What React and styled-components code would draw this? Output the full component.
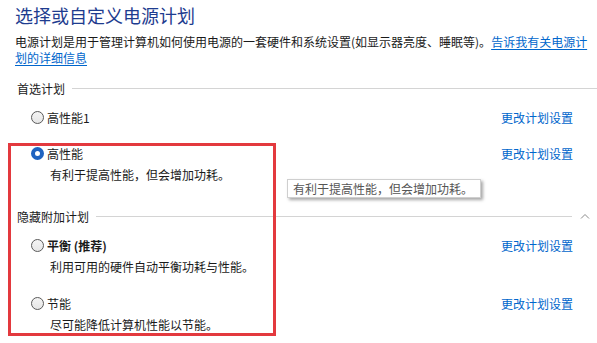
import React from 'react';
import styled, {createGlobalStyle} from 'styled-components';

const GlobalStyle = createGlobalStyle`
    html, body {
        margin: 0;
        padding: 0;
        background: #ffffff;
    }

    body {
        font-family: 'Microsoft YaHei', 'Noto Sans CJK SC', 'Noto Sans', sans-serif;
        font-size: 12px;
        color: #1a1a1a;
    }
`;

const Page = styled.main`
    position: relative;
    width: 597px;
    height: 343px;
    overflow: hidden;
    box-sizing: border-box;
    padding: 3px 0 0 15px;
`;

const Title = styled.h1`
    margin: 0;
    font-size: 18px;
    line-height: 24px;
    font-weight: normal;
    color: #1e3c8f;
`;

const Intro = styled.p`
    margin: 7px 8px 0 0;
    line-height: 16px;
`;

const IntroLink = styled.a`
    color: #0066cc;
    text-decoration: underline;
    text-underline-offset: 2px;
`;

const Section = styled.section`
    margin-top: ${(p) => p.$top}px;
`;

const Header = styled.div`
    display: flex;
    align-items: center;
    height: 20px;
    padding-left: 2px;
    color: #1a1a1a;
`;

const Rule = styled.span`
    flex: 1;
    height: 1px;
    margin-left: 7px;
    background: #d4d4d4;
`;

const Chevron = styled.span`
    display: flex;
    width: 25px;
    justify-content: center;
    align-items: center;
`;

const PlanList = styled.div`
    display: flex;
    flex-direction: column;
    gap: 16px;
    margin-top: 9px;
    padding-right: 24px;
`;

const Plan = styled.div`
    display: flex;
    flex-direction: column;
`;

const PlanRow = styled.label`
    display: flex;
    align-items: center;
    height: 20px;
    padding-left: 16px;
`;

const Radio = styled.span`
    box-sizing: border-box;
    width: 13px;
    height: 13px;
    border-radius: 50%;
    margin-right: 3px;
    flex-shrink: 0;
    ${(p) =>
        p.$checked
            ? `
        border: 4px solid #1f63c0;
        background: #ffffff;
    `
            : `
        border: 1px solid #5a5a5a;
        background: linear-gradient(#f4f4f4, #e6e6e6);
    `}
`;

const PlanName = styled.span`
    flex: 1;
    font-weight: ${(p) => (p.$bold ? 'bold' : 'normal')};
`;

const ChangeLink = styled.a`
    color: #0066cc;
    text-decoration: none;
`;

const PlanDesc = styled.div`
    margin-top: 2px;
    padding-left: 35px;
    line-height: 20px;
`;

const Highlight = styled.div`
    position: absolute;
    left: 8px;
    top: 143px;
    width: 268px;
    height: 193px;
    box-sizing: border-box;
    border: 3px solid #e3393e;
    pointer-events: none;
`;

const Tooltip = styled.div`
    position: absolute;
    left: 287px;
    top: 179px;
    width: 194px;
    height: 19px;
    box-sizing: border-box;
    padding-left: 5px;
    line-height: 17px;
    color: #555555;
    background: #ffffff;
    border: 1px solid #cfcfcf;
    box-shadow: 2px 2px 3px rgba(0, 0, 0, 0.35);
`;

const plansTop = [
    {name: '高性能1'},
    {name: '高性能', desc: '有利于提高性能，但会增加功耗。', checked: true},
];

const plansHidden = [
    {name: '平衡 (推荐)', desc: '利用可用的硬件自动平衡功耗与性能。', bold: true},
    {name: '节能', desc: '尽可能降低计算机性能以节能。'},
];

const PlanItem = ({plan}) => (
    <Plan>
        <PlanRow>
            <Radio $checked={plan.checked} />
            <PlanName $bold={plan.bold}>{plan.name}</PlanName>
            <ChangeLink href={'#'}>{'更改计划设置'}</ChangeLink>
        </PlanRow>
        {plan.desc && <PlanDesc>{plan.desc}</PlanDesc>}
    </Plan>
);

const App = () => (
    <Page>
        <GlobalStyle />
        <Title>{'选择或自定义电源计划'}</Title>
        <Intro>
            {'电源计划是用于管理计算机如何使用电源的一套硬件和系统设置(如显示器亮度、睡眠等)。'}
            <IntroLink href={'#'}>{'告诉我有关电源计划的详细信息'}</IntroLink>
        </Intro>
        <Section $top={12}>
            <Header>
                {'首选计划'}
                <Rule />
            </Header>
            <PlanList>
                {plansTop.map((plan) => (
                    <PlanItem key={plan.name} plan={plan} />
                ))}
            </PlanList>
        </Section>
        <Section $top={21}>
            <Header>
                {'隐藏附加计划'}
                <Rule />
                <Chevron>
                    <svg width={10} height={6} viewBox={'0 0 10 6'}>
                        <polyline points={'1,5.5 5,1.5 9,5.5'} fill={'none'} stroke={'#8a8a8a'} strokeWidth={1} />
                    </svg>
                </Chevron>
            </Header>
            <PlanList>
                {plansHidden.map((plan) => (
                    <PlanItem key={plan.name} plan={plan} />
                ))}
            </PlanList>
        </Section>
        <Tooltip>{'有利于提高性能，但会增加功耗。'}</Tooltip>
        <Highlight />
    </Page>
);

export default App;
